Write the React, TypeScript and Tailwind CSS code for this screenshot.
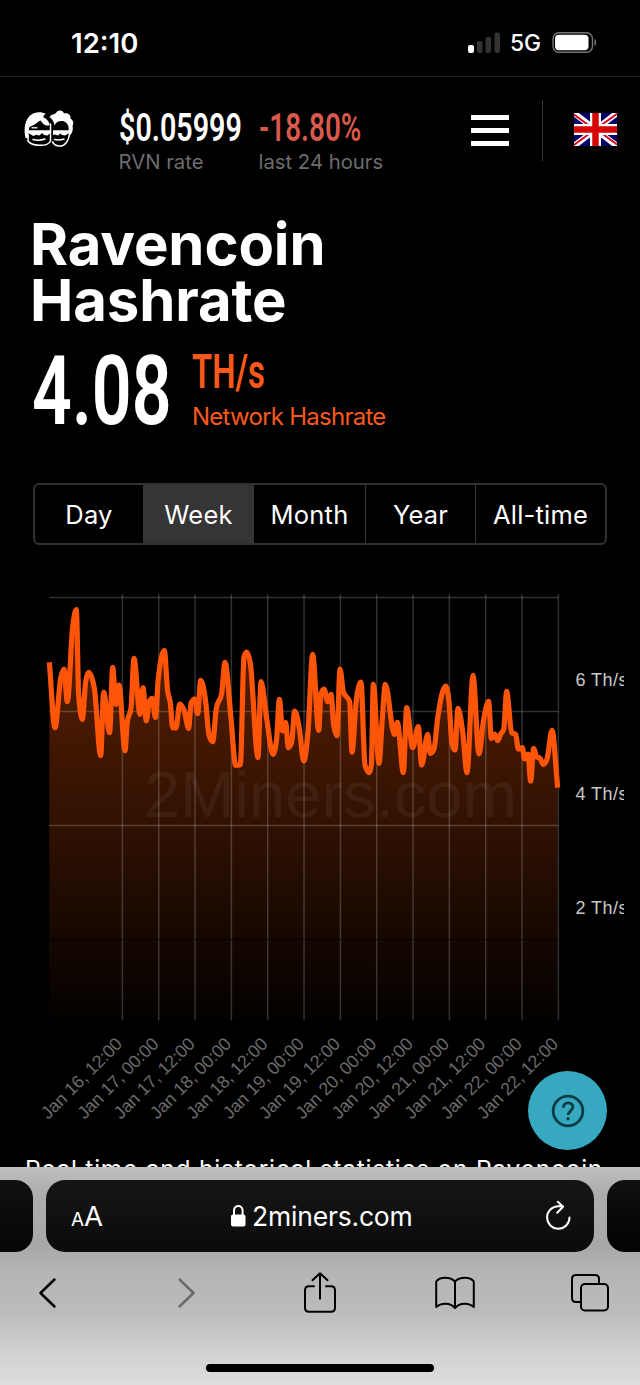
import React from "react";

// Samples of the hashrate line in chart coordinates.
const leftHalf: [number, number][] = [
  [28, 232], [45, 428], [62, 280], [72, 252], [82, 350], [98, 125], [109, 74], [116, 330], [127, 403], [137, 290], [146, 262],
  [163, 310], [182, 512], [191, 322], [209, 443], [218, 247], [228, 358], [237, 300], [255, 497], [262, 410], [273, 370],
  [282, 220], [300, 388], [309, 308], [319, 407], [328, 349], [337, 340], [346, 397], [355, 280], [373, 197], [383, 318],
  [391, 355], [398, 428], [408, 429], [419, 357], [432, 375], [446, 430], [453, 355], [464, 342], [473, 386], [482, 286],
  [497, 350], [507, 450], [518, 470], [529, 370], [545, 325], [555, 232], [573, 400], [587, 541], [601, 539], [612, 215],
  [620, 201], [631, 235], [654, 518], [663, 290], [680, 400], [699, 508], [710, 460], [718, 343], [728, 438], [737, 412],
  [745, 488], [755, 472], [764, 378], [778, 430],
];
const rightHalf: [number, number][] = [
  [11, 528], [24, 440], [38, 208], [56, 436], [63, 325], [72, 312], [83, 350], [93, 328], [101, 420], [111, 452], [120, 252],
  [130, 320], [149, 350], [156, 502], [169, 345], [183, 291], [195, 540], [208, 563], [214, 540], [220, 298], [237, 535],
  [247, 400], [256, 298], [283, 448], [292, 412], [310, 563], [320, 368], [338, 488], [355, 425], [365, 540], [383, 448],
  [391, 505], [402, 492], [413, 400], [437, 303], [447, 350], [456, 475], [465, 495], [474, 370], [488, 440], [501, 563],
  [519, 271], [537, 507], [550, 410], [566, 349], [574, 460], [584, 447], [593, 467], [602, 447], [611, 433], [620, 319],
  [635, 443], [647, 448], [655, 492], [667, 488], [674, 522], [684, 507], [692, 588], [701, 490], [710, 515], [720, 520],
  [730, 538], [741, 522], [756, 436], [773, 608],
];
const points: [number, number][] = [
  ...leftHalf.map(([x, y]): [number, number] => [40 + x / 3, y / 3]),
  ...rightHalf.map(([x, y]): [number, number] => [300 + x / 3, y / 3]),
];

// Monotone cubic interpolation, so that peaks stay on their samples.
function spline(p: [number, number][]): string {
  const n = p.length;
  const s = p.slice(1).map((q, i) => (q[1] - p[i][1]) / (q[0] - p[i][0]));
  const m = p.map((_, i) => {
    if (i === 0) return s[0];
    if (i === n - 1) return s[n - 2];
    if (s[i - 1] * s[i] <= 0) return 0;
    const h0 = p[i][0] - p[i - 1][0];
    const h1 = p[i + 1][0] - p[i][0];
    const avg = (s[i - 1] * h1 + s[i] * h0) / (h0 + h1);
    const lim = 2 * Math.min(Math.abs(s[i - 1]), Math.abs(s[i]));
    return Math.sign(avg) * Math.min(Math.abs(avg), lim);
  });
  let d = `M${p[0][0]},${p[0][1]}`;
  for (let i = 0; i < n - 1; i++) {
    const h = (p[i + 1][0] - p[i][0]) / 3;
    d += `C${p[i][0] + h},${p[i][1] + m[i] * h} ${p[i + 1][0] - h},${p[i + 1][1] - m[i + 1] * h} ${p[i + 1][0]},${p[i + 1][1]}`;
  }
  return d;
}

const line = spline(points);
const dates = [
  "Jan 16, 12:00", "Jan 17, 00:00", "Jan 17, 12:00", "Jan 18, 00:00", "Jan 18, 12:00", "Jan 19, 00:00", "Jan 19, 12:00",
  "Jan 20, 00:00", "Jan 20, 12:00", "Jan 21, 00:00", "Jan 21, 12:00", "Jan 22, 00:00", "Jan 22, 12:00",
];

function Chart() {
  return (
    <svg width="624" height="550" viewBox="0 0 624 550" className="block shrink-0 font-['Liberation_Sans',sans-serif]">
      <defs>
        <linearGradient id="area" x1="0" y1="24" x2="0" y2="435" gradientUnits="userSpaceOnUse">
          <stop offset="0" stopColor="#ff5a0a" stopOpacity="0.37" />
          <stop offset="0.5" stopColor="#ff5a0a" stopOpacity="0.2" />
          <stop offset="1" stopColor="#ff5a0a" stopOpacity="0.01" />
        </linearGradient>
      </defs>
      <path d={`${line}L557.7,435L49.3,435Z`} fill="url(#area)" />
      <g stroke="#ffffff" strokeOpacity="0.19" strokeWidth="1.5">
        {[12.6, 126.6, 240.5].map((y) => (
          <path key={y} d={`M49,${y}H558.5`} />
        ))}
        {dates.map((d, i) => (
          <path key={d} d={`M${122.4 + i * 36.33},9V435.5`} />
        ))}
      </g>
      <path d="M49,354.5H558" stroke="#000000" strokeOpacity="0.6" strokeWidth="1.3" />
      <text x="144" y="232" fontSize="65" textLength="373" fill="#ffffff" fillOpacity="0.055">2Miners.com</text>
      <path d={line} fill="none" stroke="#ff5509" strokeWidth="5.2" strokeLinejoin="round" />
      <g fontSize="18" fill="#c9c9c9">
        <text x="575.5" y="100.7" textLength="52">6 Th/s</text>
        <text x="575.5" y="214.7" textLength="52">4 Th/s</text>
        <text x="575.5" y="328.7" textLength="52">2 Th/s</text>
      </g>
      <g fontSize="17.8" fill="#6b6b6b" textAnchor="end">
        {dates.map((d, i) => (
          <text key={d} textLength="106" transform={`translate(${123.3 + i * 36.33},460) rotate(-45)`}>{d}</text>
        ))}
      </g>
    </svg>
  );
}

function Logo() {
  return (
    <svg width="52" height="40" viewBox="0 0 52 40" fill="none">
      <path d="M2.500 29C.5 20 2 11 7 6.500c4-3.500 11-4.500 16-1.500-2 .5-3 2-2.500 3.500 3 1 5.500 3.500 6.200 7.500-3 1.500-6 0-7.500-2.500l-1.700-2C14.500 13 12.500 15.500 6.500 18l-1 4v7Z" fill="#fff" />
      <path d="M26.500 8c2-3 5-2.500 6.500-4 2-3.500 7-3 8 .5 4-1 7 1.500 6.500 5 3 2 3.500 5 2 7.500 1 4-.5 8-3.500 10l-.5-9c-1-5-5-6.500-8-6-3 .3-5 2-6 4.500-.5-4-2.500-6.500-5-8.500Z" fill="#fff" />
      <path d="M4 21.300h24v2.200l-3.500 3-3.500-.5-2-2-2.500 2.500-3.500-.8-2.500 1.300L5 24ZM30 21.300h17l-1.500 3.200-3.500 2-3-.5-1.500-1.500-2.500 2-3-1-2 .5Z" fill="#fff" />
      <path d="M5 26v6c3 4.500 19 7 22.500 0V15M29.500 33c3 5 10 5.500 13.500 1 2.500-3 3.500-7 3.500-11M10 30.500q6 1.500 12-.5M31.500 30.500q5 1 9.500-.5" stroke="#fff" strokeWidth="1.500" strokeLinecap="round" />
      <path d="M8.500 18.800h6" stroke="#fff" strokeWidth="1.300" />
    </svg>
  );
}

function Flag() {
  return (
    <svg width="43" height="33" viewBox="0 0 43 33">
      <rect width="43" height="33" fill="#06006a" />
      <path d="M0 0L43 33M43 0L0 33" stroke="#fff" strokeWidth="5.800" />
      <path d="M0 1.500L17 14M26 19l17 12.500M43 .8L26 13M0 32l17-12.500" stroke="#d8061c" strokeWidth="2" />
      <path d="M21.500 0v33M0 16.500h43" stroke="#fff" strokeWidth="11" />
      <path d="M21.500 0v33M0 16.500h43" stroke="#d50505" strokeWidth="6.500" />
    </svg>
  );
}

function Status() {
  return (
    <div className="flex h-[77px] shrink-0 items-start border-b border-[#1f1f1f] pt-7 pl-[71px]">
      <div className="w-[397px] text-[27.500px] leading-[30px] font-semibold">12:10</div>
      <svg width="34" height="30" viewBox="0 0 34 30" className="shrink-0">
        <rect x="0" y="17" width="6" height="8" rx="2" fill="#fff" />
        <rect x="9" y="13" width="5.500" height="12" rx="2" fill="#333" />
        <rect x="17.500" y="9" width="5.500" height="16" rx="2" fill="#333" />
        <rect x="26.500" y="4.500" width="5.500" height="20.500" rx="2" fill="#333" />
      </svg>
      <div className="w-[50px] pl-[8px] text-[23px] leading-[31px] font-medium">
        <span className="inline-block origin-left scale-x-[0.99]">5G</span>
      </div>
      <svg width="46" height="30" viewBox="0 0 46 30" className="shrink-0">
        <rect x="1" y="4.700" width="39.500" height="19.600" rx="6" fill="none" stroke="#777" strokeWidth="1.400" />
        <rect x="3" y="6.800" width="33.500" height="15.500" rx="4" fill="#fff" />
        <path d="M42.500 11c2.200 1 2.200 6 0 7Z" fill="#777" />
      </svg>
    </div>
  );
}

function Header() {
  return (
    <header className="flex h-[123px] shrink-0 pl-[23px]">
      <div className="w-[95.500px] pt-[32px]"><Logo /></div>
      <div className="w-[140px] pt-[30px]">
        <div className="h-[42px] origin-left scale-x-[0.735] font-['Roboto',sans-serif] text-[39px] leading-[42px] font-semibold whitespace-nowrap">$0.05999</div>
        <div className="pt-px text-[20.300px] leading-6 whitespace-nowrap text-[#6d6d6d]">RVN rate</div>
      </div>
      <div className="w-[212.500px] pt-[30px]">
        <div className="h-[42px] origin-left scale-x-[0.715] font-['Roboto',sans-serif] text-[39px] leading-[42px] font-semibold whitespace-nowrap text-[#d9594c]">-18.80%</div>
        <div className="pt-px text-[20.300px] leading-6 whitespace-nowrap text-[#6d6d6d]">last 24 hours</div>
      </div>
      <div className="mt-[38px] flex h-[31px] w-[38px] flex-col justify-between">
        <div className="h-[5px] bg-white" />
        <div className="h-[5px] bg-white" />
        <div className="h-[5px] bg-white" />
      </div>
      <div className="mt-[23px] ml-[32.500px] h-[61px] w-px bg-[#383838]" />
      <div className="mt-[36px] ml-[31px]"><Flag /></div>
    </header>
  );
}

function Tabs() {
  return (
    <div className="mt-[43px] ml-[33px] flex h-[62px] w-[574px] shrink-0 overflow-hidden rounded-md border-2 border-[#303030] text-[25.500px] tracking-[0.2px] [&>div]:pt-[2px]">
      <div className="flex w-[108px] items-center justify-center">Day</div>
      <div className="flex w-[111px] items-center justify-center bg-[#353535]">Week</div>
      <div className="flex w-[112px] items-center justify-center border-r border-[#383838]">Month</div>
      <div className="flex w-[110px] items-center justify-center border-r border-[#383838]">Year</div>
      <div className="flex flex-1 items-center justify-center">All-time</div>
    </div>
  );
}

function Help() {
  return (
    <div className="absolute top-[1071px] left-[528px] flex size-[79px] items-center justify-center rounded-full bg-[#36a9c0]">
      <svg width="34" height="34" viewBox="0 0 34 34" fill="none" stroke="#0c3c46">
        <circle cx="17" cy="17" r="14.800" strokeWidth="2.800" />
        <path d="M12.300 13.800c0-3 2-4.900 4.800-4.900 2.900 0 4.800 1.700 4.800 4.200 0 3.700-4.800 3.800-4.800 8" strokeWidth="2.900" />
        <circle cx="17" cy="24.800" r="1.700" fill="#0c3c46" stroke="none" />
      </svg>
    </div>
  );
}

function Browser() {
  return (
    <footer className="flex h-[218px] flex-col items-center overflow-hidden bg-[linear-gradient(180deg,#bfbfbf_0%,#adadad_12%,#a8a8a8_36%,#b5b5b5_48%,#bbbbbd_66%,#d0d0d2_84%,#dedee1_100%)] text-white">
      <div className="mt-[13px] flex h-[72px] w-full shrink-0">
        <div className="w-[33px] rounded-r-[18px] bg-linear-to-b from-[#111] to-[#060606]" />
        <div className="mx-[13px] flex w-[548px] items-center rounded-[19px] bg-linear-to-b from-[#151515] to-[#0b0b0b] pl-[25px]">
          <div className="flex w-[160px] items-baseline pt-[2px]">
            <span className="text-[19px]">A</span>
            <span className="text-[27.500px]">A</span>
          </div>
          <svg width="15" height="24" viewBox="0 0 15 24" className="shrink-0">
            <rect x="0" y="10.500" width="14.500" height="12" rx="2" fill="#fff" />
            <path d="M3 11V6.500c0-6 8.600-6 8.600 0V11" fill="none" stroke="#fff" strokeWidth="2" />
          </svg>
          <div className="w-[299px] pt-[2px] pl-[6px] text-[26.500px] tracking-[-0.2px]">2miners.com</div>
          <svg width="28" height="32" viewBox="0 0 28 32" fill="none" stroke="#fff" strokeWidth="2" strokeLinecap="round" strokeLinejoin="round" className="shrink-0">
            <path d="M24.500 17.500A11.200 11.200 0 1 1 13.300 6.300H18M12.800 1.700L18 6.700l-5.800 6" />
          </svg>
        </div>
        <div className="flex-1 rounded-l-[18px] bg-linear-to-b from-[#111] to-[#030303]" />
      </div>
      <div className="mt-[17px] flex h-[48px] w-full shrink-0 items-center pl-[38px] text-black">
        <svg width="19" height="32" viewBox="0 0 19 32" fill="none" stroke="currentColor" strokeWidth="2.500" strokeLinecap="round" strokeLinejoin="round">
          <path d="M16.500 2.500L2.500 16l14 13.500" />
        </svg>
        <svg width="19" height="32" viewBox="0 0 19 32" fill="none" stroke="#6a6a6a" strokeWidth="2.500" strokeLinecap="round" strokeLinejoin="round" className="ml-[120px]">
          <path d="M2.500 2.500L16.500 16l-14 13.500" />
        </svg>
        <svg width="34" height="42" viewBox="0 0 34 42" fill="none" stroke="currentColor" strokeWidth="2" strokeLinecap="round" strokeLinejoin="round" className="ml-[107px]">
          <path d="M11 14.500H6q-4 0-4 4V36q0 4 4 4h22q4 0 4-4V18.500q0-4-4-4h-5M17 27V2M9.500 8.500L17 1.500l7.500 7" transform="translate(0 -.3)" />
        </svg>
        <svg width="40" height="34" viewBox="0 0 40 34" fill="none" stroke="currentColor" strokeWidth="2" strokeLinejoin="round" className="ml-[98px]">
          <path d="M20 5.500C15 .5 5 .5 1.200 5.500V31c5-4.500 14-4.500 18.800 1 4.800-5.500 13.800-5.500 18.800-1V5.500C35 .5 25 .5 20 5.500V32" />
        </svg>
        <svg width="38" height="38" viewBox="0 0 38 38" fill="none" stroke="currentColor" strokeWidth="2" strokeLinejoin="round" className="ml-[96px]">
          <rect x="10" y="10" width="27" height="26.500" rx="4" />
          <path d="M10 28H5q-4 0-4-4V5q0-4 4-4h19q4 0 4 4v5" />
        </svg>
      </div>
      <div className="mt-[47px] h-[8px] w-[228px] shrink-0 rounded-full bg-black" />
    </footer>
  );
}

export default function App() {
  return (
    <div className="relative h-[1385px] w-[640px] overflow-hidden bg-black font-['Inter',sans-serif] text-white">
      <main className="flex h-[1167px] flex-col overflow-hidden">
        <Status />
        <Header />
        <h1 className="mt-[16px] ml-[30px] h-[112px] shrink-0 text-[58px] leading-[56px] font-bold tracking-[-0.1px]">
          Ravencoin
          <br />
          Hashrate
        </h1>
        <div className="ml-[32px] flex h-[112px] shrink-0">
          <div className="w-[160px] pt-[14px]">
            <div className="h-[98px] origin-left scale-x-[0.72] font-['Roboto',sans-serif] text-[97px] leading-[98px] font-semibold">4.08</div>
          </div>
          <div className="pt-[21px] text-[#f95a1c]">
            <div className="h-[54px] origin-left scale-x-[0.685] font-['Roboto',sans-serif] text-[48px] leading-[46px] font-semibold">TH/s</div>
            <div className="text-[24px] leading-[28px] tracking-[-0.75px] whitespace-nowrap">Network Hashrate</div>
          </div>
        </div>
        <Tabs />
        <div className="mt-[40px] h-[568px] shrink-0">
          <Chart />
          <p className="ml-[25px] pt-[18px] text-[24.500px] leading-[32px] tracking-[0.77px] whitespace-nowrap">Real time and historical statistics on Ravencoin</p>
        </div>
      </main>
      <Browser />
      <Help />
    </div>
  );
}
